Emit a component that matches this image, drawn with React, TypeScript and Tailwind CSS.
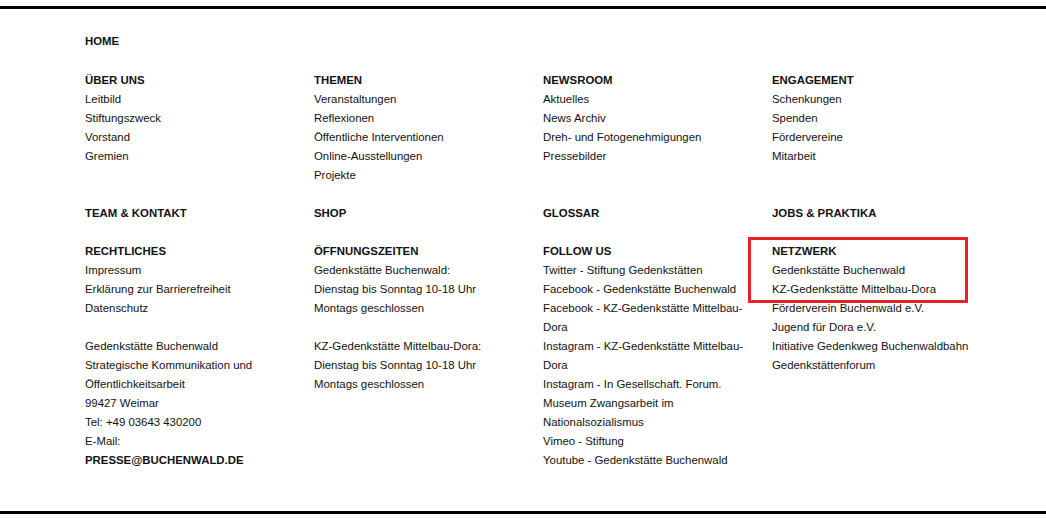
import React from "react";

type Section = {
  title: string;
  items?: string[];
  extra?: React.ReactNode;
  highlight?: boolean;
};

const rowOne: Section[] = [
  { title: "ÜBER UNS", items: ["Leitbild", "Stiftungszweck", "Vorstand", "Gremien"] },
  {
    title: "THEMEN",
    items: ["Veranstaltungen", "Reflexionen", "Öffentliche Interventionen", "Online-Ausstellungen", "Projekte"],
  },
  { title: "NEWSROOM", items: ["Aktuelles", "News Archiv", "Dreh- und Fotogenehmigungen", "Pressebilder"] },
  { title: "ENGAGEMENT", items: ["Schenkungen", "Spenden", "Fördervereine", "Mitarbeit"] },
];

const rowTwo: Section[] = [
  { title: "TEAM & KONTAKT" },
  { title: "SHOP" },
  { title: "GLOSSAR" },
  { title: "JOBS & PRAKTIKA" },
];

const rowThree: Section[] = [
  {
    title: "RECHTLICHES",
    items: ["Impressum", "Erklärung zur Barrierefreiheit", "Datenschutz"],
    extra: (
      <div className="mt-[19px]">
        <p>Gedenkstätte Buchenwald</p>
        <p>Strategische Kommunikation und Öffentlichkeitsarbeit</p>
        <p>99427 Weimar</p>
        <p>Tel: +49 03643 430200</p>
        <p>E-Mail:</p>
        <a className="font-bold">PRESSE@BUCHENWALD.DE</a>
      </div>
    ),
  },
  {
    title: "ÖFFNUNGSZEITEN",
    items: ["Gedenkstätte Buchenwald:", "Dienstag bis Sonntag 10-18 Uhr", "Montags geschlossen"],
    extra: (
      <div className="mt-[19px]">
        <p>KZ-Gedenkstätte Mittelbau-Dora:</p>
        <p>Dienstag bis Sonntag 10-18 Uhr</p>
        <p>Montags geschlossen</p>
      </div>
    ),
  },
  {
    title: "FOLLOW US",
    items: [
      "Twitter - Stiftung Gedenkstätten",
      "Facebook - Gedenkstätte Buchenwald",
      "Facebook - KZ-Gedenkstätte Mittelbau-Dora",
      "Instagram - KZ-Gedenkstätte Mittelbau-Dora",
      "Instagram - In Gesellschaft. Forum. Museum Zwangsarbeit im Nationalsozialismus",
      "Vimeo - Stiftung",
      "Youtube - Gedenkstätte Buchenwald",
    ],
  },
  {
    title: "NETZWERK",
    highlight: true,
    items: [
      "Gedenkstätte Buchenwald",
      "KZ-Gedenkstätte Mittelbau-Dora",
      "Förderverein Buchenwald e.V.",
      "Jugend für Dora e.V.",
      "Initiative Gedenkweg Buchenwaldbahn",
      "Gedenkstättenforum",
    ],
  },
];

function Column({ section }: { section: Section }) {
  return (
    <div className="relative">
      {section.highlight && (
        <div className="absolute -left-[24px] -top-[5px] w-[220px] h-[66px] border-[3px] border-[#e8202a] pointer-events-none" />
      )}
      <h3 className="font-bold">{section.title}</h3>
      {section.items && (
        <ul>
          {section.items.map((item) => (
            <li key={item}>
              <a>{item}</a>
            </li>
          ))}
        </ul>
      )}
      {section.extra}
    </div>
  );
}

export default function App() {
  return (
    <div className="w-full h-[519px] bg-white pt-[6px] pb-[5px]">
      <footer
        className="h-full border-y-[3px] border-black px-[85px] pt-[23px] text-[11.4px] leading-[19px] text-[#111]"
        style={{ fontFamily: '"Liberation Sans", Arial, sans-serif' }}
      >
        <div className="grid grid-cols-[repeat(4,211px)] gap-x-[18px] gap-y-[19px]">
          <h3 className="col-span-4 mb-[1px] font-bold">HOME</h3>
          {[...rowOne, ...rowTwo, ...rowThree].map((section) => (
            <Column key={section.title} section={section} />
          ))}
        </div>
      </footer>
    </div>
  );
}
